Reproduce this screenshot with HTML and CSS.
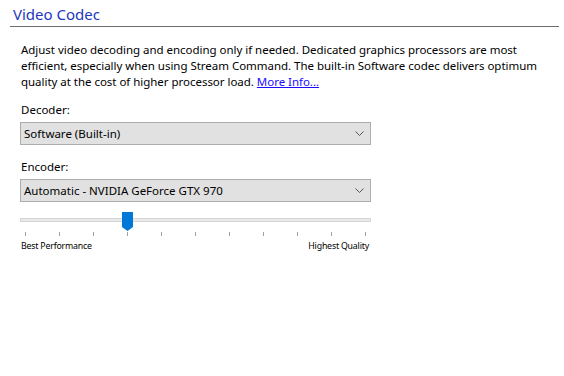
FILE: index.html
```html
<!DOCTYPE html>
<html>
<head>
<meta charset="utf-8">
<link rel="stylesheet" href="styles.css">
</head>
<body>
<div class="page">
  <div class="header"><h1 class="title">Video Codec</h1></div>
  <div class="content">
    <p class="desc">Adjust video decoding and encoding only if needed. Dedicated graphics processors are most<br>efficient, especially when using Stream Command. The built-in Software codec delivers optimum<br>quality at the cost of higher processor load. <a class="link" href="#">More Info...</a></p>
    <div class="field">
      <div class="label">Decoder:</div>
      <div class="select"><span>Software (Built-in)</span>
        <svg class="chev" width="9" height="5" viewBox="0 0 9 5"><path d="M0.5 0.5 L4.5 4.5 L8.5 0.5" fill="none" stroke="#555" stroke-width="1"/></svg>
      </div>
    </div>
    <div class="field">
      <div class="label">Encoder:</div>
      <div class="select"><span>Automatic - NVIDIA GeForce GTX 970</span>
        <svg class="chev" width="9" height="5" viewBox="0 0 9 5"><path d="M0.5 0.5 L4.5 4.5 L8.5 0.5" fill="none" stroke="#555" stroke-width="1"/></svg>
      </div>
    </div>
    <div class="slider">
      <div class="track"></div>
      <svg class="thumb" width="11" height="19" viewBox="0 0 11 19"><path d="M0 0 H11 V15 L5.5 19 L0 15 Z" fill="#0078d7"/></svg>
      <div class="ticks">
        <i></i><i></i><i></i><i></i><i></i><i></i><i></i><i></i><i></i><i></i><i></i>
      </div>
      <div class="scale"><span>Best Performance</span><span>Highest Quality</span></div>
    </div>
  </div>
</div>
</body>
</html>
```

FILE: styles.css
```css
html, body {
  margin: 0;
  padding: 0;
  background: #fff;
}
body {
  font-family: "Noto Sans", "Open Sans", sans-serif;
  color: #000;
}
.page {
  width: 564px;
  height: 376px;
}
.header {
  margin: 0 5px 0 10px;
  border-bottom: 1px solid #6d6d6d;
  padding: 4px 0 0 3px;
  height: 22px;
}
.title {
  margin: 0;
  font-size: 15px;
  font-weight: normal;
  color: #2336bd;
  line-height: 20px;
}
.content {
  padding: 15px 0 0 20px;
  width: 351px;
}
.desc {
  margin: 0 0 0 1px;
  font-size: 11.5px;
  line-height: 16px;
  white-space: nowrap;
  letter-spacing: -0.03px;
}
.link {
  color: #1a0dff;
  text-decoration: underline;
}
.field {
  margin-top: 12px;
}
.field + .field {
  margin-top: 14px;
}
.label {
  font-size: 11.5px;
  line-height: 16px;
  margin-left: 1px;
  margin-bottom: 4px;
}
.select {
  height: 21px;
  background: #e1e1e1;
  border: 1px solid #adadad;
  display: flex;
  align-items: center;
  justify-content: space-between;
  padding: 0 6px 0 3px;
  font-size: 11.5px;
}
.chev {
  display: block;
}
.slider {
  position: relative;
  margin-top: 16px;
}
.track {
  height: 2px;
  background: #e7eae9;
  border: 1px solid #d6d6d6;
}
.thumb {
  position: absolute;
  left: 102px;
  top: -6px;
}
.ticks {
  display: flex;
  justify-content: space-between;
  padding: 0 5px;
  margin-top: 10px;
  height: 4px;
}
.ticks i {
  display: block;
  width: 1px;
  height: 4px;
  background: #a0a0a0;
}
.scale {
  display: flex;
  justify-content: space-between;
  font-size: 8.8px;
  line-height: 12px;
  margin-top: 4px;
  padding: 0 2px 0 1px;
  letter-spacing: -0.2px;
}
```
